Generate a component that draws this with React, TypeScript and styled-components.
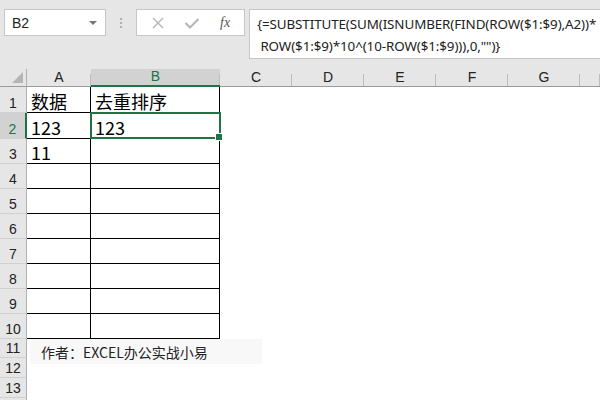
import React from 'react';
import styled, { createGlobalStyle } from 'styled-components';

const GREEN = '#217346';

const Global = createGlobalStyle`
  html, body {
    margin: 0;
    padding: 0;
    background: #ffffff;
  }
  body {
    width: 600px;
    height: 400px;
    overflow: hidden;
    font-family: "Noto Sans", "Noto Sans CJK SC", sans-serif;
  }
`;

const Page = styled.div`
  width: 600px;
  height: 400px;
  display: flex;
  flex-direction: column;
  overflow: hidden;
  position: relative;
`;

const TopBar = styled.div`
  background: #e6e6e6;
  display: flex;
  align-items: flex-start;
  padding: 9px 0 10px 4px;
  height: 50px;
`;

const NameBox = styled.div`
  width: 100px;
  height: 25px;
  background: #fff;
  border: 1px solid #c6c6c6;
  display: flex;
  align-items: center;
  justify-content: space-between;
  padding: 0 8px 0 7px;
  box-sizing: content-box;
  font-family: "Liberation Sans", "Noto Sans", sans-serif;
  font-size: 14px;
  color: #222;
  box-sizing: border-box;
  width: 102px;
  height: 27px;
`;

const Caret = styled.span`
  width: 0;
  height: 0;
  border-left: 4px solid transparent;
  border-right: 4px solid transparent;
  border-top: 4px solid #777;
`;

const Dots = styled.div`
  width: 30px;
  height: 27px;
  display: flex;
  flex-direction: column;
  align-items: center;
  justify-content: center;
  gap: 2px;
  span {
    width: 2px;
    height: 2px;
    background: #b0b0b0;
  }
`;

const FxBox = styled.div`
  width: 109px;
  height: 27px;
  box-sizing: border-box;
  background: #fff;
  border: 1px solid #c6c6c6;
  display: flex;
  align-items: center;
  justify-content: space-around;
  padding: 0 4px;
  margin-right: 4px;
`;

const FxText = styled.span`
  font-family: "Liberation Serif", serif;
  font-style: italic;
  font-size: 14px;
  color: #555;
`;

const FormulaBox = styled.div`
  flex: 1;
  height: 50px;
  box-sizing: border-box;
  background: #fff;
  border: 1px solid #c6c6c6;
  border-right: none;
  padding: 3px 0 0 7px;
  font-family: "Noto Sans", sans-serif;
  font-size: 13.4px;
  line-height: 22px;
  color: #222;
  white-space: pre;
  letter-spacing: -0.1px;
`;

const Sheet = styled.div`
  display: grid;
  grid-template-columns: 27px 64px 129px 72px 72px 72px 72px 72px 20px;
  grid-template-rows: 18px 26px 26px repeat(8, 25px) 19px 20px 20px 20px;
  position: relative;
`;

const Corner = styled.div`
  background: #e6e6e6;
  border-right: 1px solid #b0b0b0;
  border-bottom: 1px solid #9b9b9b;
  position: relative;
  &::after {
    content: '';
    position: absolute;
    right: 3px;
    bottom: 3px;
    border-left: 11px solid transparent;
    border-bottom: 11px solid #b5b5b5;
  }
`;

const ColHead = styled.div<{ $active?: boolean }>`
  background: ${(p) => (p.$active ? '#d2d2d2' : '#e6e6e6')};
  border-bottom: ${(p) => (p.$active ? `2px solid ${GREEN}` : '1px solid #9b9b9b')};
  color: ${(p) => (p.$active ? GREEN : '#222')};
  font-family: "Liberation Sans", sans-serif;
  font-size: 14px;
  display: flex;
  align-items: flex-end;
  justify-content: center;
  padding-bottom: 1px;
  box-sizing: border-box;
  position: relative;
  &::after {
    content: '';
    position: absolute;
    right: 0;
    top: 5px;
    bottom: 0;
    width: 1px;
    background: #bdbdbd;
  }
`;

const RowHead = styled.div<{ $active?: boolean }>`
  background: ${(p) => (p.$active ? '#d2d2d2' : '#e6e6e6')};
  border-right: ${(p) => (p.$active ? `2px solid ${GREEN}` : '1px solid #b0b0b0')};
  border-bottom: 1px solid #d0d0d0;
  color: ${(p) => (p.$active ? GREEN : '#222')};
  font-family: "Liberation Sans", sans-serif;
  font-size: 14px;
  display: flex;
  align-items: flex-end;
  justify-content: center;
  padding-bottom: 1px;
  box-sizing: border-box;
  line-height: 16px;
`;

const Cell = styled.div<{ $boxed?: boolean }>`
  border-right: ${(p) => (p.$boxed ? '1px solid #000' : 'none')};
  border-bottom: ${(p) => (p.$boxed ? '1px solid #000' : 'none')};
  background: #fff;
  font-family: "Noto Sans CJK SC", "Noto Sans", sans-serif;
  font-size: 18px;
  color: #000;
  display: flex;
  align-items: flex-end;
  padding: 0 0 0 4px;
  box-sizing: border-box;
  line-height: 22px;
  overflow: hidden;
  white-space: nowrap;
`;

const Selection = styled.div`
  position: absolute;
  left: 90px;
  top: 43px;
  width: 131px;
  height: 27px;
  border: 2px solid ${GREEN};
  box-sizing: border-box;
  pointer-events: none;
  &::after {
    content: '';
    position: absolute;
    right: -4px;
    bottom: -4px;
    width: 6px;
    height: 6px;
    background: ${GREEN};
    border: 1px solid #fff;
  }
`;

const Note = styled.div`
  position: absolute;
  left: 30px;
  top: 270px;
  width: 232px;
  height: 25px;
  background: #f8f8f8;
  font-family: "Noto Sans CJK SC", sans-serif;
  font-size: 14px;
  color: #222;
  display: flex;
  align-items: center;
  padding-left: 11px;
  box-sizing: border-box;
  white-space: pre;
`;

const cols = ['A', 'B', 'C', 'D', 'E', 'F', 'G', ''];

const data: Record<number, [string, string]> = {
  1: ['数据', '去重排序'],
  2: ['123', '123'],
  3: ['11', ''],
};

const rows = Array.from({ length: 14 }, (_, i) => i + 1);

export default function App() {
  return (
    <Page>
      <Global />
      <TopBar>
        <NameBox>
          B2
          <Caret />
        </NameBox>
        <Dots>
          <span />
          <span />
          <span />
        </Dots>
        <FxBox>
          <svg width="14" height="14" viewBox="0 0 14 14">
            <path d="M2 2 L12 12 M12 2 L2 12" stroke="#b4b4b4" strokeWidth="1.4" fill="none" />
          </svg>
          <svg width="16" height="14" viewBox="0 0 16 14">
            <path d="M1.5 7 L6 11.5 L14.5 3" stroke="#b4b4b4" strokeWidth="2" fill="none" />
          </svg>
          <FxText>fx</FxText>
        </FxBox>
        <FormulaBox>
          {'{=SUBSTITUTE(SUM(ISNUMBER(FIND(ROW($1:$9),A2))*\n ROW($1:$9)*10^(10-ROW($1:$9))),0,"")}'}
        </FormulaBox>
      </TopBar>
      <Sheet>
        <Corner />
        {cols.map((c, i) => (
          <ColHead key={i} $active={c === 'B'}>
            {c}
          </ColHead>
        ))}
        {rows.map((r) => (
          <React.Fragment key={r}>
            <RowHead $active={r === 2}>{r}</RowHead>
            {cols.map((c, i) => {
              const boxed = r <= 10 && i < 2;
              const text = i < 2 && data[r] ? data[r][i] : '';
              return (
                <Cell key={c + i} $boxed={boxed}>
                  {text}
                </Cell>
              );
            })}
          </React.Fragment>
        ))}
        <Selection />
        <Note>{'作者：EXCEL办公实战小易'}</Note>
      </Sheet>
    </Page>
  );
}
